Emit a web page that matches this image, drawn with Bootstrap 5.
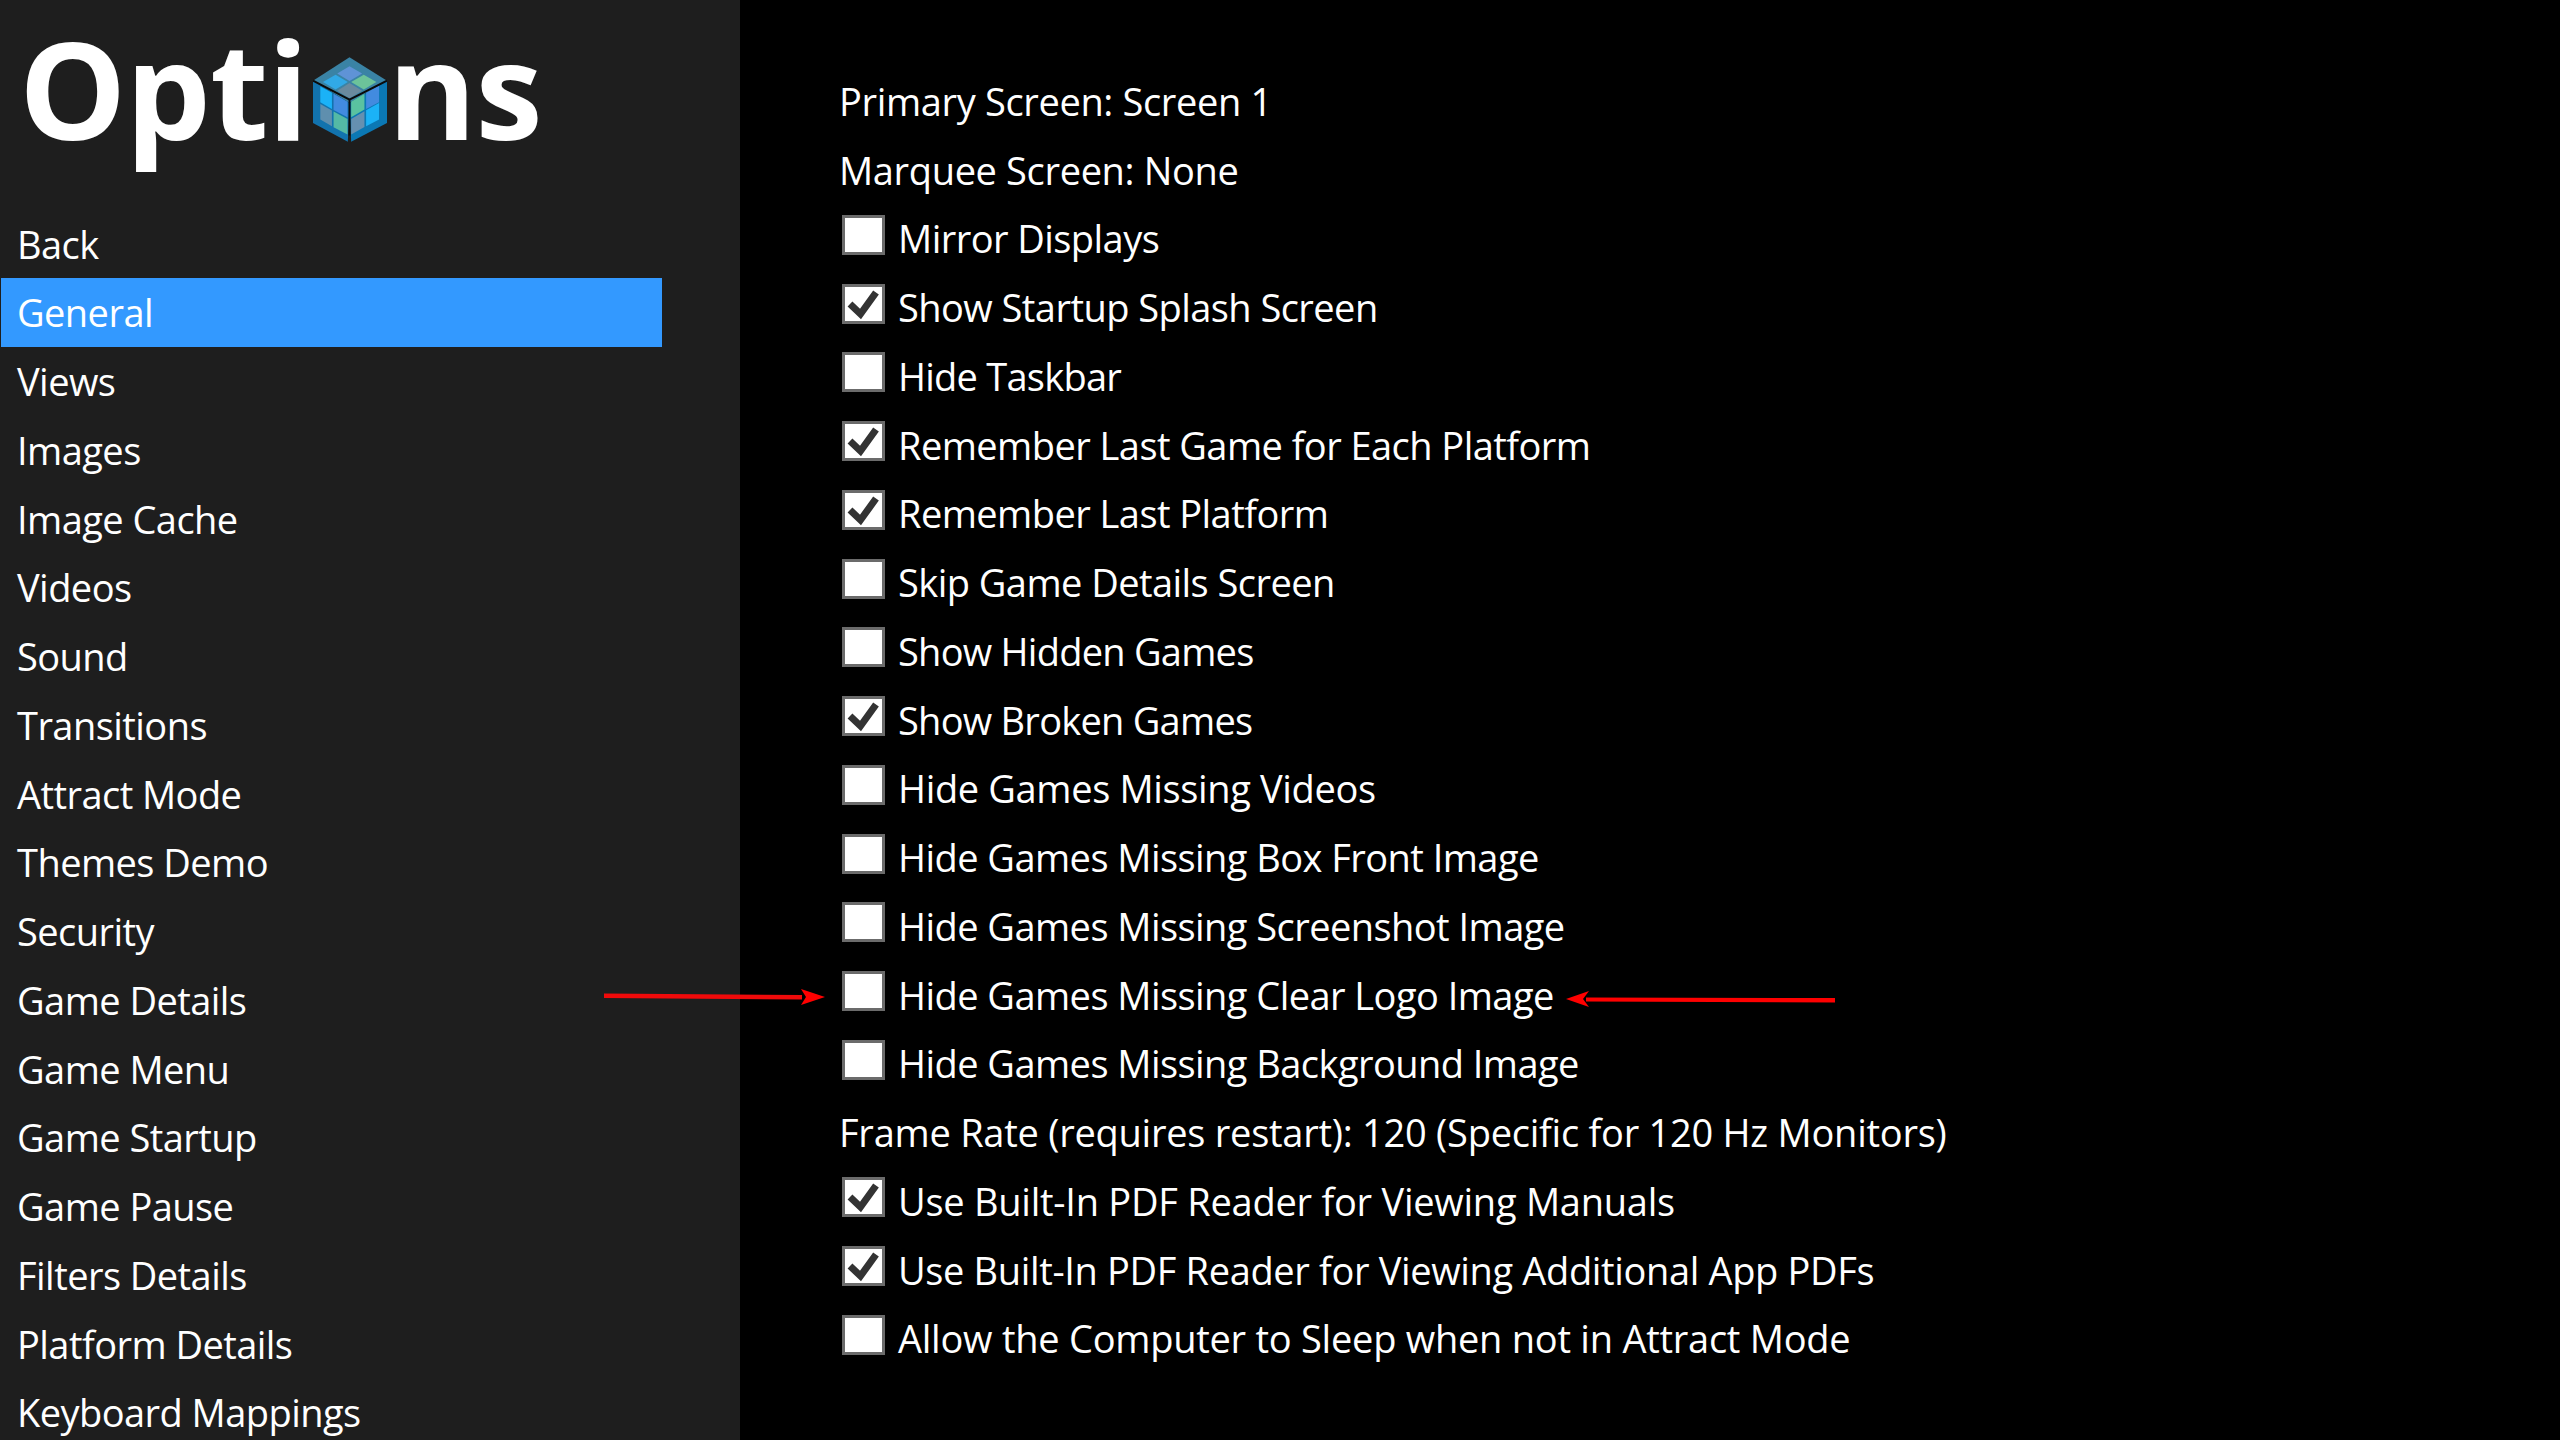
<!DOCTYPE html>
<html lang="en">
<head>
<meta charset="utf-8">
<title>Options</title>
<link href="https://cdn.jsdelivr.net/npm/bootstrap@5.3.0/dist/css/bootstrap.min.css" rel="stylesheet">
<style>
html,body{height:100%;overflow:hidden;background:#000;}
body{font-family:"Open Sans","Noto Sans",sans-serif;color:#fff;}
.app-shell{height:1440px;position:relative;overflow:hidden;}
.side-pane{width:740px;flex:none;background:#1e1e1e;height:1440px;overflow:hidden;}
.title-row{height:209.5px;padding-left:19px;font-size:135px;font-weight:700;line-height:176px;letter-spacing:-1px;}
.title-row svg{width:74px;height:85px;margin:57px 1px 0 5px;flex:none;}
.menu-item{display:block;height:68.75px;line-height:68.75px;font-size:38px;letter-spacing:-.55px;color:#fff;padding-left:16px;margin-right:78px;margin-left:1px;text-decoration:none;white-space:nowrap;}
.menu-item:hover,.menu-item:focus{color:#fff;}
.menu-item.is-current{background:#3399ff;}
.main-pane{padding:67px 0 0 99px;}
.opt-row{height:68.75px;font-size:38px;letter-spacing:-.55px;white-space:nowrap;margin:0;padding:0;min-height:0;}
.opt-box.form-check-input{width:43px;height:40px;margin:-8px 13px 0 3px;float:none;flex:none;border:3px solid #6b6b6b;border-radius:0;background-color:#fff;opacity:1;box-shadow:none;}
.opt-box.form-check-input:checked{background-color:#fff;border-color:#6b6b6b;background-size:100% 100%;background-image:url("data:image/svg+xml,%3Csvg xmlns='http://www.w3.org/2000/svg' viewBox='0 0 37 34'%3E%3Cpath d='M5 17 15.500 27 31 5.500' fill='none' stroke='%23333' stroke-width='7'/%3E%3C/svg%3E");}
.opt-row .form-check-label{opacity:1;color:#fff;}
.fit-wide{letter-spacing:-.25px;}
.fit-mid{letter-spacing:-.35px;}
.fit-narrow{letter-spacing:-.75px;}
.arrow-mark{position:absolute;left:0;top:0;pointer-events:none;}
</style>
</head>
<body>
<div class="app-shell d-flex">
  <aside class="side-pane">
    <div class="title-row d-flex align-items-start">
      <span>Opti</span>
      <svg viewBox="135 112 223 255" aria-hidden="true">
        <polygon points="245,112 358,183 245,250 135,183" fill="#3a83a5"/>
        <polygon points="135,183 245,250 240,367 135,310" fill="#1273ae"/>
        <polygon points="358,183 358,310 250,367 245,250" fill="#0b78b4"/>
        <polygon points="245,139 283,161 245,184 208,161" fill="#5f93d6"/>
        <polygon points="203,165 240,187 203,209 165,187" fill="#31a9e6"/>
        <polygon points="288,165 326,187 288,209 250,187" fill="#6cc39a"/>
        <polygon points="245,190 283,213 245,236 208,213" fill="#6a8a9e"/>
        <polygon points="157,200 192,219 192,268 157,248" fill="#1bb2f7"/>
        <polygon points="197,222 239,246 239,293 197,271" fill="#428bdf"/>
        <polygon points="157,253 192,273 192,320 157,300" fill="#5f8fae"/>
        <polygon points="197,276 239,298 239,345 197,323" fill="#54b9a5"/>
        <polygon points="250,246 290,222 290,270 250,293" fill="#5ac2a0"/>
        <polygon points="295,219 334,197 334,248 295,268" fill="#428bdf"/>
        <polygon points="250,298 290,275 290,322 250,345" fill="#6690b0"/>
        <polygon points="295,272 334,250 334,300 295,320" fill="#1bb2f7"/>
        <path d="M135 183 245 240 358 183M245 240V348" fill="none" stroke="#0a0a0a" stroke-width="6"/>
      </svg>
      <span>ns</span>
    </div>
    <nav class="d-flex flex-column">
      <a class="menu-item" href="#">Back</a>
      <a class="menu-item is-current" href="#">General</a>
      <a class="menu-item" href="#">Views</a>
      <a class="menu-item" href="#">Images</a>
      <a class="menu-item" href="#">Image Cache</a>
      <a class="menu-item" href="#">Videos</a>
      <a class="menu-item" href="#">Sound</a>
      <a class="menu-item" href="#">Transitions</a>
      <a class="menu-item" href="#">Attract Mode</a>
      <a class="menu-item" href="#">Themes Demo</a>
      <a class="menu-item" href="#">Security</a>
      <a class="menu-item" href="#">Game Details</a>
      <a class="menu-item" href="#">Game Menu</a>
      <a class="menu-item" href="#">Game Startup</a>
      <a class="menu-item" href="#">Game Pause</a>
      <a class="menu-item" href="#">Filters Details</a>
      <a class="menu-item" href="#">Platform Details</a>
      <a class="menu-item" href="#">Keyboard Mappings</a>
    </nav>
  </aside>
  <main class="main-pane flex-grow-1">
    <div class="opt-row fit-mid d-flex align-items-center">Primary Screen: Screen 1</div>
    <div class="opt-row fit-mid d-flex align-items-center">Marquee Screen: None</div>
    <div class="opt-row form-check d-flex align-items-center"><input class="opt-box form-check-input" type="checkbox" id="c1"><label class="form-check-label" for="c1">Mirror Displays</label></div>
    <div class="opt-row form-check d-flex align-items-center"><input class="opt-box form-check-input" type="checkbox" id="c2" checked><label class="form-check-label" for="c2">Show Startup Splash Screen</label></div>
    <div class="opt-row fit-narrow form-check d-flex align-items-center"><input class="opt-box form-check-input" type="checkbox" id="c3"><label class="form-check-label" for="c3">Hide Taskbar</label></div>
    <div class="opt-row form-check d-flex align-items-center"><input class="opt-box form-check-input" type="checkbox" id="c4" checked><label class="form-check-label" for="c4">Remember Last Game for Each Platform</label></div>
    <div class="opt-row form-check d-flex align-items-center"><input class="opt-box form-check-input" type="checkbox" id="c5" checked><label class="form-check-label" for="c5">Remember Last Platform</label></div>
    <div class="opt-row form-check d-flex align-items-center"><input class="opt-box form-check-input" type="checkbox" id="c6"><label class="form-check-label" for="c6">Skip Game Details Screen</label></div>
    <div class="opt-row fit-narrow form-check d-flex align-items-center"><input class="opt-box form-check-input" type="checkbox" id="c7"><label class="form-check-label" for="c7">Show Hidden Games</label></div>
    <div class="opt-row fit-narrow form-check d-flex align-items-center"><input class="opt-box form-check-input" type="checkbox" id="c8" checked><label class="form-check-label" for="c8">Show Broken Games</label></div>
    <div class="opt-row fit-mid form-check d-flex align-items-center"><input class="opt-box form-check-input" type="checkbox" id="c9"><label class="form-check-label" for="c9">Hide Games Missing Videos</label></div>
    <div class="opt-row form-check d-flex align-items-center"><input class="opt-box form-check-input" type="checkbox" id="c10"><label class="form-check-label" for="c10">Hide Games Missing Box Front Image</label></div>
    <div class="opt-row form-check d-flex align-items-center"><input class="opt-box form-check-input" type="checkbox" id="c11"><label class="form-check-label" for="c11">Hide Games Missing Screenshot Image</label></div>
    <div class="opt-row form-check d-flex align-items-center"><input class="opt-box form-check-input" type="checkbox" id="c12"><label class="form-check-label" for="c12">Hide Games Missing Clear Logo Image</label></div>
    <div class="opt-row form-check d-flex align-items-center"><input class="opt-box form-check-input" type="checkbox" id="c13"><label class="form-check-label" for="c13">Hide Games Missing Background Image</label></div>
    <div class="opt-row fit-wide d-flex align-items-center">Frame Rate (requires restart): 120 (Specific for 120 Hz Monitors)</div>
    <div class="opt-row fit-wide form-check d-flex align-items-center"><input class="opt-box form-check-input" type="checkbox" id="c14" checked><label class="form-check-label" for="c14">Use Built-In PDF Reader for Viewing Manuals</label></div>
    <div class="opt-row fit-mid form-check d-flex align-items-center"><input class="opt-box form-check-input" type="checkbox" id="c15" checked><label class="form-check-label" for="c15">Use Built-In PDF Reader for Viewing Additional App PDFs</label></div>
    <div class="opt-row fit-wide form-check d-flex align-items-center"><input class="opt-box form-check-input" type="checkbox" id="c16"><label class="form-check-label" for="c16">Allow the Computer to Sleep when not in Attract Mode</label></div>
  </main>
  <svg class="arrow-mark" width="2560" height="1440" aria-hidden="true">
    <path d="M604 993.500 802 995V999.500L604 998Z" fill="#f00a0a"/>
    <path d="M825 997 801 989 806 997 801 1005Z" fill="#f00"/>
    <path d="M1586 997.500 1835 998V1002.500L1586 1001.500Z" fill="#f00"/>
    <path d="M1566 999 1589 991 1583 999 1589 1007Z" fill="#f00"/>
  </svg>
</div>
</body>
</html>
